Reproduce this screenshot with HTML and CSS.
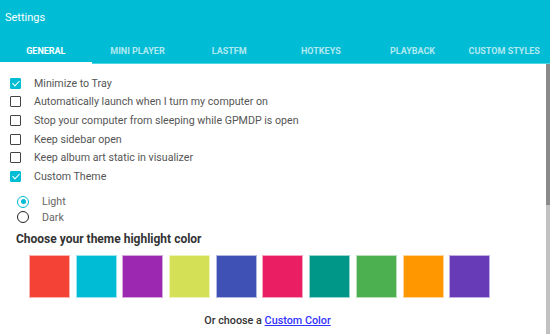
FILE: index.html
```html
<!DOCTYPE html>
<html lang="en">
<head>
  <meta charset="UTF-8" />
  <title>Settings</title>
  <link rel="stylesheet" href="styles.css">
</head>
<body>
  <div class="window">
    <header class="appbar">
      <div class="title">Settings</div>
      <nav class="tabs">
        <div class="tab active">General</div>
        <div class="tab">Mini Player</div>
        <div class="tab">LastFM</div>
        <div class="tab">Hotkeys</div>
        <div class="tab">Playback</div>
        <div class="tab">Custom Styles</div>
      </nav>
    </header>

    <div class="body">
      <main class="content">
        <ul class="options">
          <li><span class="box checked"></span>Minimize to Tray</li>
          <li><span class="box"></span>Automatically launch when I turn my computer on</li>
          <li><span class="box"></span>Stop your computer from sleeping while GPMDP is open</li>
          <li><span class="box"></span>Keep sidebar open</li>
          <li><span class="box"></span>Keep album art static in visualizer</li>
          <li><span class="box checked"></span>Custom Theme</li>
        </ul>

        <div class="radios">
          <div class="radio-row"><span class="radio on"></span>Light</div>
          <div class="radio-row"><span class="radio"></span>Dark</div>
        </div>

        <h3 class="heading">Choose your theme highlight color</h3>

        <div class="swatches">
          <div class="swatch red"></div>
          <div class="swatch cyan"></div>
          <div class="swatch purple"></div>
          <div class="swatch lime"></div>
          <div class="swatch indigo"></div>
          <div class="swatch pink"></div>
          <div class="swatch teal"></div>
          <div class="swatch green"></div>
          <div class="swatch orange"></div>
          <div class="swatch deep-purple"></div>
        </div>

        <p class="custom">Or choose a <a href="#">Custom Color</a></p>
      </main>
      <div class="scrollbar"><div class="thumb"></div></div>
    </div>
  </div>
</body>
</html>
```

FILE: styles.css
```css
html, body {
  margin: 0;
  height: 100%;
}
body {
  font-family: Roboto, "Liberation Sans", sans-serif;
  background: #fff;
  overflow: hidden;
}
.window {
  display: flex;
  flex-direction: column;
  height: 334px;
}
.appbar {
  background: #00bcd4;
  height: 64px;
  display: flex;
  flex-direction: column;
  flex-shrink: 0;
}
.title {
  color: #fff;
  font-size: 11px;
  padding: 11px 0 0 5px;
  height: 27px;
}
.tabs {
  display: flex;
  flex: 1;
  border-bottom: 1px solid #4dd6e6;
}
.tab {
  flex: 1;
  text-align: center;
  text-transform: uppercase;
  font-size: 9px;
  font-weight: 700;
  color: rgba(255,255,255,0.7);
  padding-top: 8px;
  box-sizing: border-box;
}
.tab.active {
  color: #fff;
  border-bottom: 2px solid #fff;
  margin-bottom: -1px;
}
.body {
  flex: 1;
  display: flex;
  min-height: 0;
}
.content {
  flex: 1;
  padding: 10px 0 0 10px;
}
.scrollbar {
  width: 4px;
  background: #c1c1c1;
  display: flex;
  flex-direction: column;
}
.thumb {
  height: 141px;
  background: #8a8a8a;
}
.options {
  list-style: none;
  margin: 0;
  padding: 0;
}
.options li {
  display: flex;
  align-items: center;
  height: 18.6px;
  font-size: 10.65px;
  color: #555;
}
.box {
  width: 9px;
  height: 9px;
  border: 1.5px solid #444;
  border-radius: 1px;
  margin-right: 13px;
  position: relative;
}
.box.checked {
  background: #00bcd4;
  border-color: #00bcd4;
}
.box.checked::after {
  content: "";
  position: absolute;
  left: 3px;
  top: 0px;
  width: 3px;
  height: 6px;
  border: solid #fff;
  border-width: 0 1.5px 1.5px 0;
  transform: rotate(45deg);
}
.radios {
  margin: 8.5px 0 0 7px;
}
.radio-row {
  display: flex;
  align-items: center;
  height: 15.4px;
  font-size: 10.65px;
  color: #666;
}
.radio {
  width: 10px;
  height: 10px;
  border: 1.5px solid #222;
  border-radius: 50%;
  margin-right: 13px;
  position: relative;
}
.radio.on {
  border-color: #00bcd4;
}
.radio.on::after {
  content: "";
  position: absolute;
  left: 2.5px;
  top: 2.5px;
  width: 5px;
  height: 5px;
  border-radius: 50%;
  background: #00bcd4;
}
.heading {
  margin: 7.5px 0 0 6px;
  font-size: 12px;
  font-weight: 700;
  color: #333;
}
.swatches {
  display: flex;
  gap: 5.7px;
  margin: 9px 0 0 19px;
}
.swatch {
  width: 39px;
  height: 41px;
  border: 1px solid rgba(255,255,255,0.6);
  box-sizing: content-box;
}
.red { background: #f44336; }
.cyan { background: #00bcd4; }
.purple { background: #9c27b0; }
.lime { background: #d4e157; }
.indigo { background: #3f51b5; }
.pink { background: #e91e63; }
.teal { background: #009688; }
.green { background: #4caf50; }
.orange { background: #ff9800; }
.deep-purple { background: #673ab7; }
.custom {
  margin: 16px 0 0 0;
  padding-right: 21px;
  text-align: center;
  font-size: 10.8px;
  font-weight: 500;
  color: #333;
}
.custom a {
  color: #3333ff;
}
```
